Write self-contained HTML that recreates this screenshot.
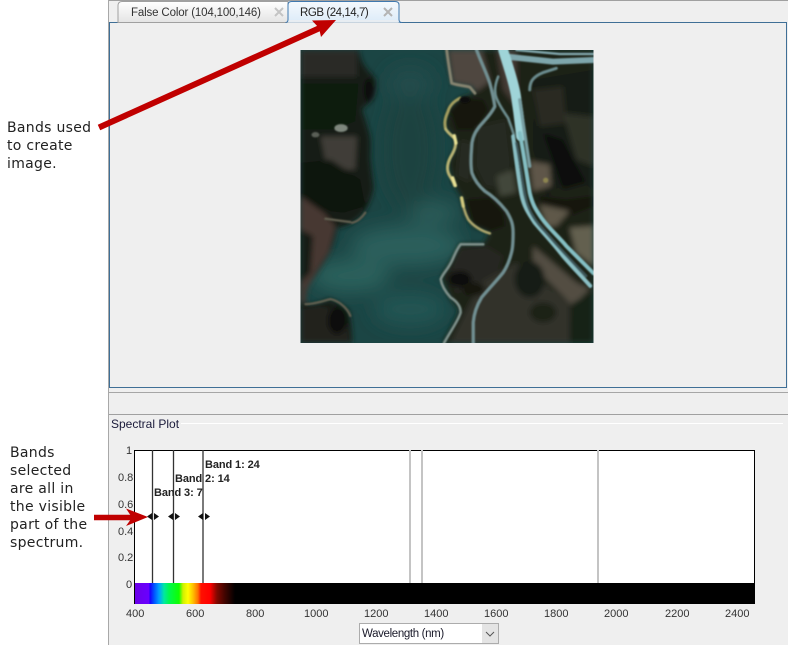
<!DOCTYPE html>
<html><head><meta charset="utf-8"><style>
html,body{margin:0;padding:0;background:#fff}
#p{position:relative;width:788px;height:645px;overflow:hidden;background:#fff;font-family:"Liberation Sans",sans-serif}
#p div,#p span,#p svg{position:absolute}
.n{font-family:"DejaVu Sans",sans-serif;font-size:14px;line-height:18px;color:#222;white-space:pre;letter-spacing:.3px}
.t{font-size:11px;color:#333;line-height:12px;white-space:pre}
.b{font-size:11px;font-weight:bold;color:#222;line-height:12px;white-space:pre;letter-spacing:-.1px}
</style></head><body><div id="p">
<div style="left:108px;top:0;width:680px;height:645px;background:#efefef"></div>
<div style="left:108px;top:0;width:1px;height:645px;background:#a8a8a8"></div>
<div style="left:109px;top:0;width:679px;height:1px;background:#a0a0a0"></div>
<div style="left:109px;top:22px;width:678px;box-sizing:border-box;border:1px solid #3f6f96;background:#efefef;height:366px"></div>
<svg style="left:108px;top:0" width="300" height="24">
<defs><linearGradient id="tg" x1="0" y1="0" x2="0" y2="1"><stop offset="0" stop-color="#fff"/><stop offset="1" stop-color="#e4e4e4"/></linearGradient>
<linearGradient id="ta" x1="0" y1="0" x2="0" y2="1"><stop offset="0" stop-color="#f5f9fd"/><stop offset="1" stop-color="#dcebf8"/></linearGradient></defs>
<path d="M10 22.500V6q0-4.500 4-4.500H180V22.500z" fill="url(#tg)" stroke="#a0a0a0"/>
<path d="M177.500 22.500q2.500 0 2.500-3V5q0-3.500 3.500-3.500H287q4 0 4 3.500V19.500q0 3 3 3" fill="url(#ta)" stroke="#3f78ae"/>
<rect x="180.500" y="20" width="110" height="4" fill="#efefef" opacity=".6"/>
<path d="M167 8l8 8M175 8l-8 8" stroke="#c4c4c4" stroke-width="2"/>
<path d="M276 8l8 8M284 8l-8 8" stroke="#b4b4b4" stroke-width="2"/>
</svg>
<div class="t" style="left:131px;top:6px;font-size:11.500px;color:#333;line-height:14px;letter-spacing:-.15px">False Color (104,100,146)</div>
<div class="t" style="left:300px;top:6px;font-size:11.500px;color:#222;line-height:14px;letter-spacing:-.45px">RGB (24,14,7)</div>

<svg style="left:300px;top:50px" width="294" height="293" viewBox="0 0 882 882">
<defs>
<filter id="bl" x="-5%" y="-5%" width="110%" height="110%"><feGaussianBlur stdDeviation="28"/></filter>
<filter id="bm" x="-5%" y="-5%" width="110%" height="110%"><feGaussianBlur stdDeviation="8"/></filter>
<filter id="bs" x="-5%" y="-5%" width="110%" height="110%"><feGaussianBlur stdDeviation="2.500"/></filter>
<clipPath id="c"><rect width="882" height="882"/></clipPath>
</defs>
<g clip-path="url(#c)">
<rect width="882" height="882" fill="#1b4544"/>
<g filter="url(#bl)">
<ellipse cx="320" cy="590" rx="170" ry="60" fill="#2a5e5b"/>
<ellipse cx="150" cy="680" rx="120" ry="50" fill="#2c605c"/>
<ellipse cx="400" cy="490" rx="80" ry="35" fill="#295b58"/>
<ellipse cx="330" cy="780" rx="110" ry="50" fill="#245452"/>
<ellipse cx="330" cy="300" rx="80" ry="180" fill="#1a4241"/>
<ellipse cx="330" cy="100" rx="70" ry="50" fill="#204c4b"/>
</g>
<g filter="url(#bm)">
<path d="M175 0C180 30 190 50 225 85C230 110 225 130 220 145C205 165 190 170 185 180C195 210 205 240 210 265C212 290 210 310 210 325C213 360 218 390 220 415C215 440 208 460 200 475C185 500 170 510 155 520C140 530 125 532 110 535C105 560 98 585 90 605C80 625 70 640 60 655C45 680 30 700 20 715C12 735 12 750 15 765C40 768 65 760 85 750C105 755 130 770 145 785C152 810 155 850 155 882H0V0z" fill="#171b15"/>
<rect x="0" y="0" width="170" height="80" fill="#292c26"/>
<path d="M0 100H175L165 215 100 240H0z" fill="#0e1a11"/>
<path d="M60 260H170L165 360H80z" fill="#3f3d37"/>
<path d="M0 340L90 330 180 390 195 470 130 490 40 480 0 450z" fill="#111410"/>
<path d="M0 440L70 490 105 530 85 610 50 665 20 720 15 760 0 760z" fill="#463833"/>
<path d="M0 540L38 560 30 670 0 700z" fill="#121b13"/>
<path d="M0 780L60 770 130 790 150 882H0z" fill="#24241d"/>
<ellipse cx="110" cy="815" rx="28" ry="40" fill="#0a0c09"/>
<ellipse cx="205" cy="120" rx="14" ry="35" fill="#0a0d09"/>

<path d="M440 0L455 100 515 110 525 130 480 145 445 180 435 230 465 265 465 300 445 340 460 400 485 445 495 495 520 530 570 550 550 585 480 585 460 625 425 685 450 745 480 785 450 845 430 882H882V0z" fill="#1e2119"/>
<path d="M445 0H545L570 95 530 125 515 108 458 98z" fill="#4f4641"/>
<path d="M590 0L650 0 650 170 610 120z" fill="#443a35"/>
<path d="M450 180L490 145 550 150 565 180 525 240 470 240z" fill="#141911"/>
<path d="M480 270L515 280 510 400 470 380z" fill="#282b20"/>
<path d="M530 230L620 210 635 340 610 420 555 410 525 350z" fill="#262a20"/>
<path d="M590 380L640 360 650 430 600 440z" fill="#43463b"/>
<path d="M500 450L570 445 610 490 615 530 570 545 520 520z" fill="#131810"/>
<path d="M700 90L882 60V420L820 380 740 440 700 300z" fill="#171c15"/>
<path d="M700 120L790 110 800 220 720 230z" fill="#292c23"/>
<path d="M790 190L882 200 882 350 830 330z" fill="#2e3127"/>
<path d="M730 250L790 270 860 400 790 420z" fill="#0b0e09"/>
<path d="M690 335L750 345 755 410 700 425z" fill="#5f5648"/>
<path d="M720 440L800 450 880 440 882 470 810 500 730 490z" fill="#15170e"/>
<path d="M720 465L810 485 770 530 740 530z" fill="#5f584a"/>
<path d="M810 535L882 530V650L830 610z" fill="#63604f"/>
<path d="M700 590L830 700 870 720 820 770 700 650z" fill="#524e43"/>
<path d="M480 600L560 590 610 620 590 680 540 740 470 730 440 690z" fill="#282620"/>
<path d="M540 700L650 640 810 760 810 882H450z" fill="#31332a"/>
<ellipse cx="690" cy="690" rx="45" ry="55" fill="#171a13"/>
<ellipse cx="730" cy="790" rx="40" ry="30" fill="#1d2219"/>
<ellipse cx="480" cy="690" rx="35" ry="25" fill="#0f110d"/>
<ellipse cx="520" cy="720" rx="35" ry="20" fill="#14160f"/>
<path d="M820 760L882 730V882H810z" fill="#162016"/>
</g>
<g filter="url(#bs)" fill="none" stroke-linecap="round" stroke-linejoin="round">
<path d="M440 0C445 40 450 70 455 100C480 108 500 108 510 112L525 130" stroke="#85836f" stroke-width="9"/>
<path d="M480 145C460 155 448 170 444 185C435 205 432 220 437 238" stroke="#a39d5e" stroke-width="9"/>
<path d="M437 238C445 252 458 258 465 268C470 285 465 300 452 322C440 345 440 365 450 380C458 392 462 400 464 408" stroke="#b8b273" stroke-width="9"/>
<path d="M463 258L468 280M458 385L466 408" stroke="#e8e194" stroke-width="10"/>
<path d="M485 445C490 470 494 490 505 510C520 530 545 545 570 552" stroke="#aba46c" stroke-width="8"/>
<path d="M485 445L490 470" stroke="#d2ca7e" stroke-width="10"/>
<path d="M550 585L482 585C470 600 465 615 458 630C445 660 430 670 422 690C425 710 438 730 452 745C468 755 482 770 482 790C475 815 455 840 432 882" stroke="#7e908a" stroke-width="8"/>
<path d="M155 520C170 518 185 505 195 490M75 508L150 518M15 765C40 766 70 755 90 750C115 755 140 775 150 800" stroke="#605e50" stroke-width="7"/>
<path d="M530 0C545 40 560 70 570 100C578 130 582 150 585 170C570 200 550 215 535 235C520 255 515 275 515 295C512 330 512 350 516 370C525 395 540 412 555 425C580 440 600 460 620 485C635 510 640 525 640 550C640 580 638 600 635 610C628 640 620 655 610 670C590 695 570 715 545 745C530 770 522 795 520 820L520 882" stroke="#718f92" stroke-width="10"/>
<path d="M595 80C585 105 582 125 590 145C600 170 612 185 625 205C632 225 638 240 642 255" stroke="#6c8c8e" stroke-width="8"/>
<path d="M690 120C690 95 700 80 730 68L770 55" stroke="#6a8b8e" stroke-width="9"/>
<path d="M620 20L760 35L882 30" stroke="#7ea6ac" stroke-width="18"/>
<path d="M650 0L780 12H882" stroke="#86adb4" stroke-width="7"/>
<path d="M610 0C625 50 640 90 648 135C655 180 660 220 664 260" stroke="#9fd4d8" stroke-width="30"/>
<path d="M660 250C670 300 680 370 690 430C698 465 708 480 725 505C750 540 780 565 800 590C830 620 860 650 882 672" stroke="#84bfc4" stroke-width="12"/>
<path d="M640 260C648 320 655 380 665 435C672 470 685 490 705 520C730 550 760 580 790 620C820 655 850 685 872 710" stroke="#8abfc5" stroke-width="12"/>
<path d="M650 280C662 340 668 400 680 455C690 490 710 520 735 545C765 580 800 620 860 680" stroke="#3c5558" stroke-width="8"/>
<path d="M660 150C670 220 682 300 690 350" stroke="#789fa3" stroke-width="10"/>
</g>
<g filter="url(#bs)"><ellipse cx="122" cy="235" rx="20" ry="12" fill="#7e877d"/><ellipse cx="45" cy="255" rx="12" ry="8" fill="#5a5e56"/><ellipse cx="495" cy="150" rx="16" ry="10" fill="#0c0e0a"/><ellipse cx="738" cy="392" rx="8" ry="8" fill="#8c8450"/></g>
</g></svg>

<div style="left:109px;top:392px;width:679px;height:1px;background:#a6a6a6"></div>
<div style="left:109px;top:414px;width:679px;height:1px;background:#a0a0a0"></div>
<div style="left:181px;top:423px;width:602px;height:1px;background:#fff"></div>
<div style="left:111px;top:417px;font-size:12px;line-height:14px;color:#1a1a3a;white-space:pre">Spectral Plot</div>

<svg style="left:130px;top:445px" width="640" height="162">
<defs><linearGradient id="sp" x1="0" x2="1" y1="0" y2="0">
<stop offset="0" stop-color="#6a00e8"/><stop offset=".14" stop-color="#6a00ff"/><stop offset=".15" stop-color="#1a00ff"/><stop offset=".19" stop-color="#0050ff"/><stop offset=".24" stop-color="#00a0ff"/><stop offset=".29" stop-color="#00e8a0"/><stop offset=".34" stop-color="#00f850"/><stop offset=".44" stop-color="#10ff00"/><stop offset=".48" stop-color="#d0f000"/><stop offset=".53" stop-color="#ffff00"/><stop offset=".58" stop-color="#ffc000"/><stop offset=".63" stop-color="#ff7000"/><stop offset=".66" stop-color="#ff1000"/><stop offset=".75" stop-color="#ff0000"/><stop offset=".82" stop-color="#800800"/><stop offset=".9" stop-color="#400400"/><stop offset="1" stop-color="#000"/>
</linearGradient></defs>
<rect x="4.500" y="5.500" width="620" height="133" fill="#fff" stroke="#000"/>
<path d="M280 5v133M292 5v133M468 5v133" stroke="#c4c4c4" stroke-width="2"/>
<path d="M22.500 5v133M43.500 5v133M73 5v133" stroke="#333" stroke-width="1.300"/>
<rect x="4" y="138" width="621" height="21" fill="#000"/>
<rect x="5" y="138" width="100" height="21" fill="url(#sp)"/>
<path d="M17 71.500l5-3.500v7zM24 68l5 3.500-5 3.500zM38 71.500l5-3.500v7zM45 68l5 3.500-5 3.500zM68 71.500l5-3.500v7zM75 68l5 3.500-5 3.500z" fill="#111"/>
</svg>

<div class="b" style="left:205px;top:459px">Band 1: 24</div>
<div class="b" style="left:175px;top:473px">Band 2: 14</div>
<div class="b" style="left:154px;top:487px">Band 3: 7</div>

<div class="t" style="left:126px;top:445px">1</div>
<div class="t" style="left:118px;top:472px">0.8</div>
<div class="t" style="left:118px;top:499px">0.6</div>
<div class="t" style="left:118px;top:526px">0.4</div>
<div class="t" style="left:118px;top:552px">0.2</div>
<div class="t" style="left:126px;top:579px">0</div>

<div class="t" style="left:126px;top:608px">400</div>
<div class="t" style="left:186px;top:608px">600</div>
<div class="t" style="left:246px;top:608px">800</div>
<div class="t" style="left:304px;top:608px">1000</div>
<div class="t" style="left:364px;top:608px">1200</div>
<div class="t" style="left:424px;top:608px">1400</div>
<div class="t" style="left:484px;top:608px">1600</div>
<div class="t" style="left:544px;top:608px">1800</div>
<div class="t" style="left:604px;top:608px">2000</div>
<div class="t" style="left:665px;top:608px">2200</div>
<div class="t" style="left:725px;top:608px">2400</div>

<div style="left:359px;top:623px;width:140px;height:21px;box-sizing:border-box;border:1px solid #acacac;background:#fff"></div>
<div style="left:482px;top:624px;width:16px;height:19px;background:#e4e4e4"></div>
<svg style="left:482px;top:624px" width="16" height="19"><path d="M4 8l4 4 4-4" fill="none" stroke="#555" stroke-width="1"/></svg>
<div style="left:362px;top:627px;font-size:11.500px;line-height:14px;color:#1a1a2a;white-space:pre;letter-spacing:-.35px">Wavelength (nm)</div>

<div class="n" style="left:7px;top:119px">Bands used
to create
image.</div>
<div class="n" style="left:10px;top:444px">Bands
selected
are all in
the visible
part of the
spectrum.</div>

<svg style="left:0;top:0" width="788" height="645">
<path d="M99 127.500L322 27" stroke="#c00000" stroke-width="6" fill="none"/>
<path d="M336 20L312 20.500 319 28 321 37z" fill="#c00000"/>
<path d="M94 517.500H136" stroke="#c00000" stroke-width="5.500" fill="none"/>
<path d="M148 517L126 508.500 132 517.500 126 526z" fill="#c00000"/>
</svg>
</div></body></html>
